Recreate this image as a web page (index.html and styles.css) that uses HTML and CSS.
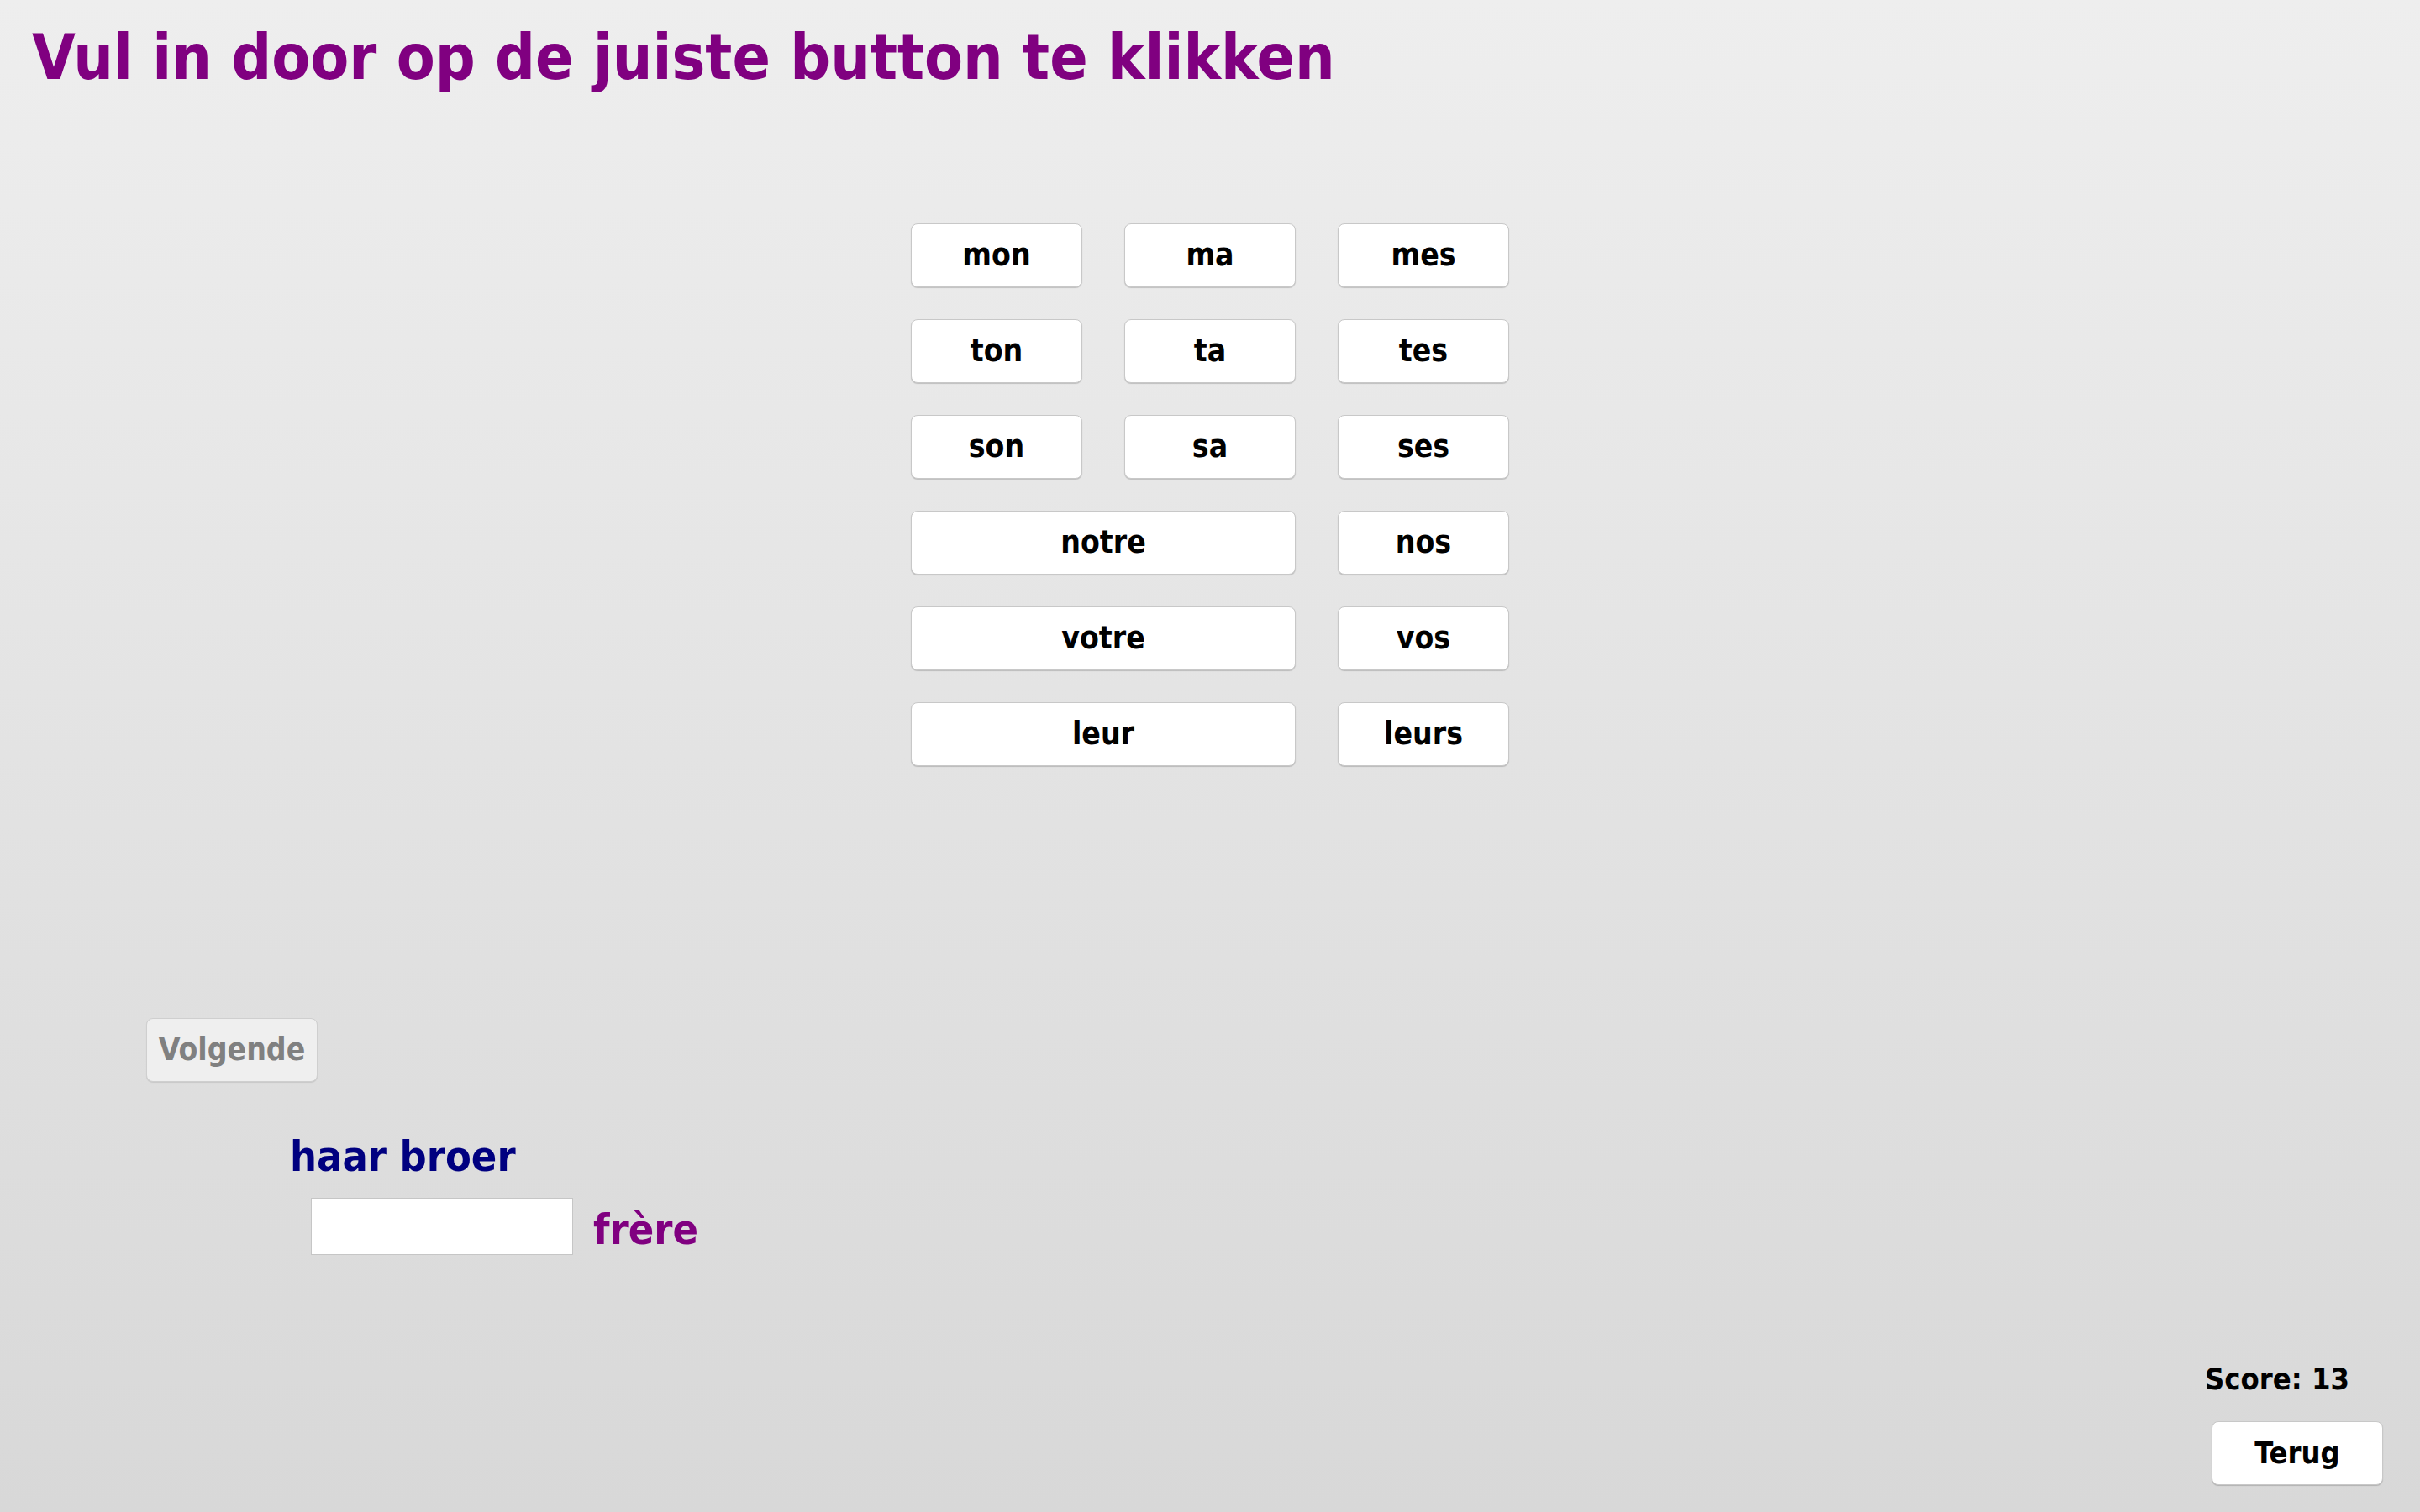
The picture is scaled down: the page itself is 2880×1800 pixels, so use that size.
FILE: index.html
```html
<!DOCTYPE html>
<html lang="nl">
<head>
    <meta charset="UTF-8">
    <meta name="viewport" content="width=device-width, initial-scale=1.0">
    <title>Bezittelijke voornaamwoorden</title>
    <link rel="stylesheet" href="styles.css">
</head>
<body>
    <h1 class="title">Vul in door op de juiste button te klikken</h1>

    <div class="choices">
        <button class="choice">mon</button>
        <button class="choice">ma</button>
        <button class="choice">mes</button>
        <button class="choice">ton</button>
        <button class="choice">ta</button>
        <button class="choice">tes</button>
        <button class="choice">son</button>
        <button class="choice">sa</button>
        <button class="choice">ses</button>
        <button class="choice wide">notre</button>
        <button class="choice">nos</button>
        <button class="choice wide">votre</button>
        <button class="choice">vos</button>
        <button class="choice wide">leur</button>
        <button class="choice">leurs</button>
    </div>

    <button class="next" disabled>Volgende</button>

    <div class="question">haar broer</div>
    <div class="answer-row">
        <input type="text" class="answer">
        <span class="noun">frère</span>
    </div>

    <div class="footer">
        <div class="score">Score: 13</div>
        <button class="back">Terug</button>
    </div>
</body>
</html>
```
FILE: styles.css
```css
html, body {
    margin: 0;
    height: 100%;
}
body {
    font-family: "DejaVu Sans Condensed", "DejaVu Sans", sans-serif;
    font-weight: bold;
    background: linear-gradient(to bottom, #eeeeee, #d8d8d8);
    display: flex;
    flex-direction: column;
    align-items: flex-start;
    height: 1800px;
    box-sizing: border-box;
}
.title {
    margin: 0;
    padding: 29px 0 0 38px;
    font-size: 74.5px;
    line-height: 80px;
    font-weight: bold;
    color: #800080;
}
.choices {
    margin: 157px 0 0 1084px;
    display: grid;
    grid-template-columns: 204px 204px 204px;
    grid-auto-rows: 76px;
    column-gap: 50px;
    row-gap: 38px;
}
button {
    font-family: inherit;
    font-weight: bold;
    padding: 0;
    margin: 0;
    border-radius: 8px;
    box-sizing: border-box;
}
.choice, .back {
    background: #ffffff;
    color: #000000;
    border: 1px solid #c8c8c8;
    box-shadow: 0 1px 1px rgba(0, 0, 0, 0.18);
    font-size: 37px;
    line-height: 74px;
    height: 76px;
}
.choice.wide {
    grid-column: span 2;
}
.next {
    margin: 300px 0 0 174px;
    width: 204px;
    height: 76px;
    background: #efefef;
    color: #808080;
    border: 1px solid #cfcfcf;
    box-shadow: 0 1px 1px rgba(0, 0, 0, 0.1);
    font-size: 37px;
    line-height: 74px;
}
.question {
    margin: 59px 0 0 345px;
    font-size: 50px;
    line-height: 60px;
    color: #000080;
}
.answer-row {
    display: flex;
    align-items: flex-start;
    gap: 24px;
    margin: 19px 0 0 370px;
}
.answer {
    width: 312px;
    height: 68px;
    box-sizing: border-box;
    border: 1px solid #c6c6c6;
    background: #ffffff;
    margin: 0;
    padding: 0 8px;
    font-size: 30px;
}
.noun {
    margin-top: 8px;
    font-size: 50px;
    line-height: 60px;
    color: #800080;
}
.footer {
    margin: auto 44px 32px 0;
    align-self: flex-end;
    width: 204px;
    display: flex;
    flex-direction: column;
}
.score {
    margin-left: -8px;
    font-size: 36px;
    line-height: 40px;
    color: #000000;
    white-space: nowrap;
}
.back {
    margin-top: 30px;
    width: 204px;
    font-size: 36px;
}
```
